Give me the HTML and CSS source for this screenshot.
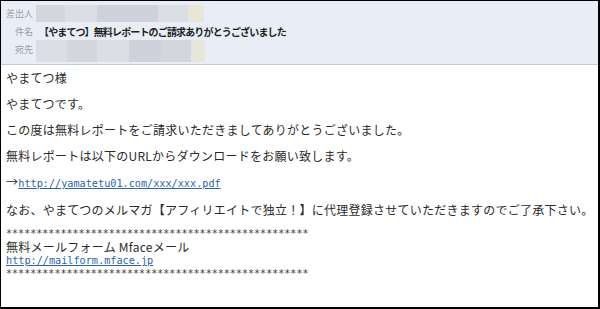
FILE: index.html
```html
<!DOCTYPE html>
<html lang="ja">
<head>
    <meta charset="UTF-8">
    <title>無料レポートのご請求ありがとうございました</title>
    <link rel="stylesheet" href="styles.css">
</head>
<body>
    <div class="mail">
        <div class="mail-head">
            <div class="head-row">
                <span class="label">差出人</span>
                <span class="masked">
                    <i class="m1" style="width:29px"></i><i class="m2" style="width:32px"></i><i class="m3" style="width:61px"></i><i class="m2" style="width:30px"></i><i class="m4" style="width:16px"></i>
                </span>
            </div>
            <div class="head-row">
                <span class="label">件名</span>
                <span class="subject">【やまてつ】無料レポートのご請求ありがとうございました</span>
            </div>
            <div class="head-row row-to">
                <span class="label">宛先</span>
                <span class="masked tall">
                    <i class="m2" style="width:31px"></i><i class="m1" style="width:30px"></i><i class="m2" style="width:32px"></i><i class="m3" style="width:32px"></i><i class="m1" style="width:30px"></i><i class="m4" style="width:14px"></i>
                </span>
            </div>
        </div>

        <div class="mail-body">
            <p>やまてつ様</p>
            <p>やまてつです。</p>
            <p>この度は無料レポートをご請求いただきましてありがとうございました。</p>
            <p>無料レポートは以下のURLからダウンロードをお願い致します。</p>
            <p>→<a class="mono" href="#">http://yamatetu01.com/xxx/xxx.pdf</a></p>
            <p>なお、やまてつのメルマガ【アフィリエイトで独立！】に代理登録させていただきますのでご了承下さい。</p>

            <div class="sig">
                <div class="mono stars">**************************************************</div>
                <div>無料メールフォーム Mfaceメール</div>
                <div><a class="mono" href="#">http://mailform.mface.jp</a></div>
                <div class="mono stars">**************************************************</div>
            </div>
        </div>
    </div>
</body>
</html>
```

FILE: styles.css
```css
html, body {
    margin: 0;
    padding: 0;
}
body {
    width: 600px;
    height: 309px;
    background-color: #ffffff;
    font-family: "Noto Sans CJK JP", "Liberation Sans", sans-serif;
    color: #2b2b2b;
}
.mail {
    box-sizing: border-box;
    height: 309px;
    border-style: solid;
    border-color: #000;
    border-width: 1px 2px 2px 1px;
    display: flex;
    flex-direction: column;
}
.mail-head {
    background-color: #e9edf5;
    border-bottom: 1px solid #c3cbd6;
    padding: 3px 0 3px 0;
    height: 57px;
}
.head-row {
    display: flex;
    align-items: center;
    height: 18px;
}
.label {
    width: 32px;
    text-align: right;
    font-size: 9px;
    color: #9a9ea6;
    flex-shrink: 0;
}
.masked {
    display: flex;
    height: 17px;
    margin-left: 3px;
    filter: blur(0.6px);
}
.masked.tall {
    height: 22px;
    margin-top: 4px;
}
.masked i {
    display: block;
    height: 100%;
}
.m1 { background-color: #d4d6de; }
.m2 { background-color: #dcdee5; }
.m3 { background-color: #cfd2da; }
.m4 { background-color: #e7e6d8; }
.subject {
    margin-left: 6px;
    font-size: 10px;
    font-weight: bold;
    letter-spacing: -0.85px;
    color: #1e1e1e;
}
.mail-body {
    padding: 0 0 0 5px;
    font-size: 12px;
    letter-spacing: 0.25px;
}
.mail-body p {
    margin: 0;
    line-height: 26px;
}
.mono {
    font-family: "DejaVu Sans Mono", "Liberation Mono", monospace;
    font-size: 10.2px;
    letter-spacing: 0;
}
a {
    color: #2c64ad;
    text-decoration: underline;
}
.sig {
    margin-top: 5px;
    line-height: 12.5px;
}
.stars {
    color: #3a3a3a;
    font-size: 10px;
    letter-spacing: 0.03px;
}
```
